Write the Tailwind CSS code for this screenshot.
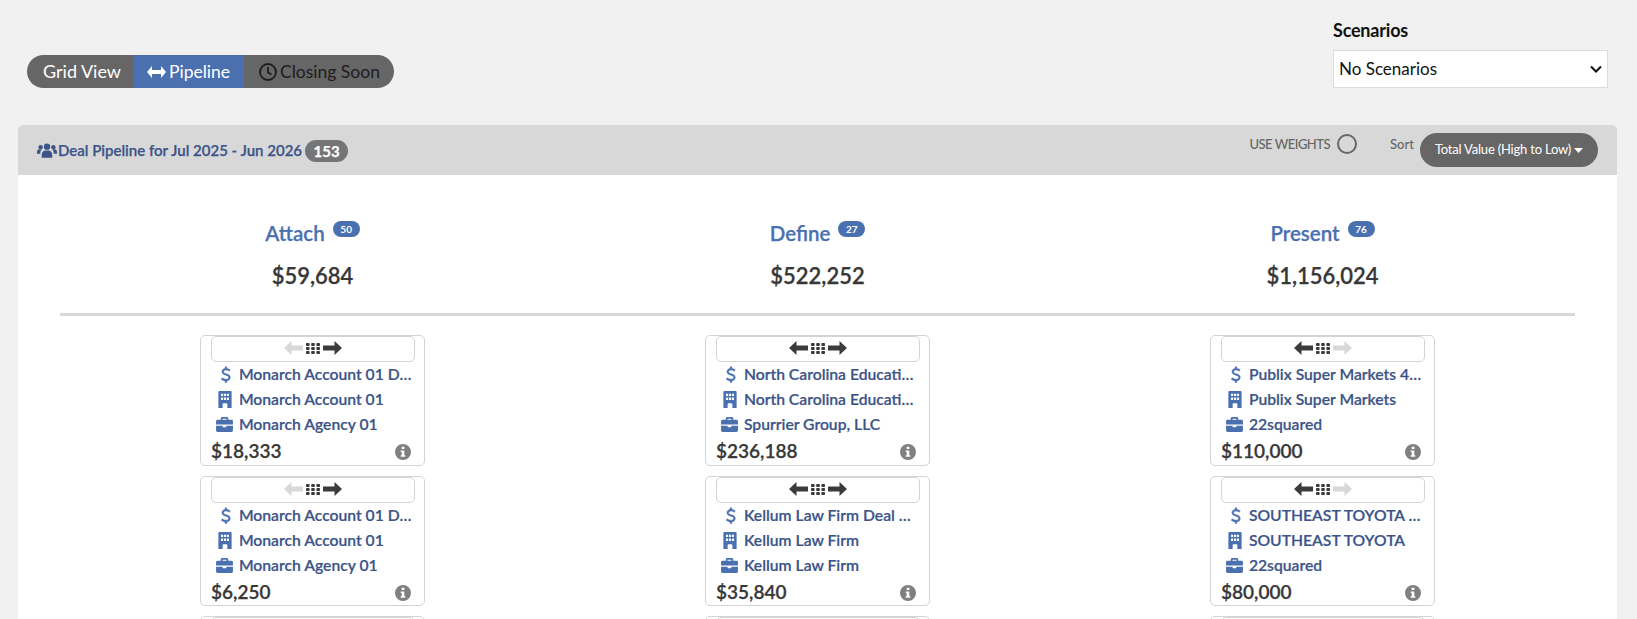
<!DOCTYPE html>
<html>
<head>
<meta charset="utf-8">
<script src="https://cdn.jsdelivr.net/npm/@tailwindcss/browser@4"></script>
</head>
<body class="bg-[#f1f1f1] font-['Lato',sans-serif] h-[619px] overflow-hidden">
<svg width="0" height="0" class="absolute">
  <defs>
    <symbol id="dollar" viewBox="0 0 12 20"><path d="M6.900 1v1.800c1.600.2 3 .8 4 1.500L9.900 6.100C8.800 5.300 7.600 4.800 6 4.800c-1.700 0-2.800.8-2.800 1.900 0 1.300 1.200 1.800 3.100 2.400 2.700.8 4.700 1.700 4.700 4.300 0 2.300-1.700 3.800-4.100 4.100V19.500H5V17.500c-1.900-.2-3.500-.9-4.600-1.900l1.100-1.700c1.200 1 2.800 1.700 4.500 1.700 1.900 0 3.100-.9 3.100-2.200 0-1.400-1.200-2-3.300-2.600C3.300 10 1.200 9.100 1.200 6.700c0-2.100 1.700-3.600 3.800-3.900V1z" fill="currentColor" stroke="currentColor" stroke-width=".6"/></symbol>
    <symbol id="building" viewBox="0 0 14 18"><path fill-rule="evenodd" d="M1 0h12a1 1 0 0 1 1 1v17H9.500v-4a1 1 0 0 0-1-1h-3a1 1 0 0 0-1 1v4H0V1a1 1 0 0 1 1-1zM2.800 2.800v2.400h2.200V2.800zm3.100 0v2.400h2.200V2.800zm3.100 0v2.400h2.200V2.800zM2.800 7v2.400h2.200V7zm3.100 0v2.400h2.200V7zM9 7v2.400h2.200V7z" fill="currentColor"/></symbol>
    <symbol id="briefcase" viewBox="0 0 18 16"><path fill-rule="evenodd" d="M5 3V1.500A1.500 1.500 0 0 1 6.500 0h5A1.500 1.500 0 0 1 13 1.500V3h3.500A1.500 1.500 0 0 1 18 4.500V8H0V4.500A1.500 1.500 0 0 1 1.500 3zm1.800 0h4.400V1.800H6.800zM0 9.300h7v1.200a.5.500 0 0 0 .5.500h3a.5.500 0 0 0 .5-.5V9.300h7v5.200a1.500 1.500 0 0 1-1.500 1.500h-15A1.500 1.500 0 0 1 0 14.500z" fill="currentColor"/></symbol>
    <symbol id="info" viewBox="0 0 16 16"><path fill-rule="evenodd" d="M8 0a8 8 0 1 1 0 16A8 8 0 0 1 8 0zM6.700 2.700v2.300h2.700V2.700zM5.700 6.500v1.500h1v3.200h-1v1.500h4.600v-1.500h-1V6.500z" fill="currentColor"/></symbol>
    <symbol id="left" viewBox="0 0 19 14"><path d="M7.500 0 0 7l7.500 7V9.500H19v-5H7.500z" fill="currentColor"/></symbol>
    <symbol id="right" viewBox="0 0 19 14"><path d="M11.500 0 19 7l-7.500 7V9.500H0v-5h11.500z" fill="currentColor"/></symbol>
    <symbol id="grip" viewBox="0 0 14 11"><g fill="#3b3b3b"><rect x="0" y="0" width="3.600" height="3" rx=".8"/><rect x="5.200" y="0" width="3.600" height="3" rx=".8"/><rect x="10.400" y="0" width="3.600" height="3" rx=".8"/><rect x="0" y="4" width="3.600" height="3" rx=".8"/><rect x="5.200" y="4" width="3.600" height="3" rx=".8"/><rect x="10.400" y="4" width="3.600" height="3" rx=".8"/><rect x="0" y="8" width="3.600" height="3" rx=".8"/><rect x="5.200" y="8" width="3.600" height="3" rx=".8"/><rect x="10.400" y="8" width="3.600" height="3" rx=".8"/></g></symbol>
  </defs>
</svg>

<div class="flex justify-between items-start h-[125px] pl-[27px] pr-[29px]">
  <div class="mt-[55px] flex h-[33px] rounded-full overflow-hidden bg-[#666666] text-[17.500px] leading-[33px]">
    <div class="w-[106px] pl-[16px] text-white text-[18px]">Grid View</div>
    <div class="w-[111px] bg-[#4a70b0] text-white flex items-center pl-[14px] gap-[3px]">
      <svg class="w-[19px] h-[12px]" viewBox="0 0 19 12"><path d="M5 0 0 6l5 6V8h9v4l5-6-5-6v4H5z" fill="currentColor"/></svg>Pipeline
    </div>
    <div class="w-[150px] text-[#1d1d1d] flex items-center pl-[15px] gap-[3px]">
      <svg class="w-[18px] h-[18px]" viewBox="0 0 18 18" fill="none" stroke="currentColor" stroke-width="1.800"><circle cx="9" cy="9" r="8"/><path d="M9 4v5.500l3.500 2"/></svg>Closing Soon
    </div>
  </div>
  <div class="w-[275px] mt-[19px]">
    <div class="text-[18px] font-bold text-[#111] leading-[22px] -tracking-[0.2px]">Scenarios</div>
    <div class="mt-[9px] h-[38px] bg-white border border-[#dcdcdc] flex items-center justify-between pl-[5px] pr-[5px] text-[17px] text-[#111]">
      <span>No Scenarios</span>
      <svg class="w-[12px] h-[8px]" viewBox="0 0 12 8" fill="none" stroke="#111" stroke-width="2"><path d="M1 1.500 6 6.500l5-5"/></svg>
    </div>
  </div>
</div>

<div class="ml-[18px] w-[1599px] rounded-t-[5px] bg-white">
  <div class="h-[50px] bg-[#d8d8d8] rounded-t-[5px] flex items-start pl-[19px] pr-[19px]">
    <div class="flex items-center mt-[13px] text-[#3c5488] text-[15px] font-semibold [-webkit-text-stroke:0.25px]">
      <svg class="w-[20px] h-[15px] mr-[1px] text-[#3c5488]" viewBox="0 0 21 15"><g fill="currentColor"><circle cx="10.500" cy="3.500" r="3.300"/><path d="M5 15v-3c0-2.500 2-4.500 4-4.500h3c2 0 4 2 4 4.500v3z"/><circle cx="3.800" cy="4" r="2.300"/><circle cx="17.200" cy="4" r="2.300"/><path d="M0 11V9c0-1.500 1-2.700 2.500-2.700H5c-1 .9-1.500 2.500-1.500 4.700zM21 11V9c0-1.500-1-2.700-2.500-2.700H16c1 .9 1.500 2.500 1.500 4.700z"/></g></svg>
      <span>Deal Pipeline for Jul 2025 - Jun 2026</span>
      <span class="ml-[3px] mt-[2px] h-[22px] w-[43px] rounded-full bg-[#757575] text-white font-bold text-[15px] leading-[22px] text-center">153</span>
    </div>
    <div class="ml-auto flex items-start">
      <span class="mt-[10px] text-[13px] leading-[18px] font-medium text-[#666] -tracking-[0.5px]">USE WEIGHTS</span>
      <span class="ml-[7px] mt-[9px] w-[20px] h-[20px] rounded-full border-2 border-[#666]"></span>
      <span class="ml-[33px] mt-[10px] text-[13px] leading-[18px] font-medium text-[#666]">Sort</span>
      <div class="ml-[6px] mt-[8px] w-[178px] h-[34px] rounded-full bg-[#666666] text-white text-[13px] flex items-center justify-center gap-[3px] -tracking-[0.2px]">
        Total Value (High to Low)
        <svg class="w-[9px] h-[5px]" viewBox="0 0 9 5"><path d="M0 0h9L4.500 5z" fill="currentColor"/></svg>
      </div>
    </div>
  </div>

  <div class="px-[42px]">
    <div class="grid grid-cols-3 h-[141px] border-b-[3px] border-[#d8d8d8] text-center">
      <div class="pt-[43px]">
        <div class="h-[30px] flex justify-center items-start">
          <span class="text-[20.500px] leading-[30px] text-[#4a70b0] font-semibold [-webkit-text-stroke:0.25px]">Attach</span>
          <span class="ml-[8px] mt-[3px] w-[27px] h-[16px] rounded-full bg-[#4a70b0] text-white text-[10px] font-bold leading-[16px]">50</span>
        </div>
        <div class="mt-[13px] text-[22px] leading-[30px] text-[#383838] font-semibold [-webkit-text-stroke:0.25px]">$59,684</div>
      </div>
      <div class="pt-[43px]">
        <div class="h-[30px] flex justify-center items-start">
          <span class="text-[20.500px] leading-[30px] text-[#4a70b0] font-semibold [-webkit-text-stroke:0.25px]">Define</span>
          <span class="ml-[8px] mt-[3px] w-[27px] h-[16px] rounded-full bg-[#4a70b0] text-white text-[10px] font-bold leading-[16px]">27</span>
        </div>
        <div class="mt-[13px] text-[22px] leading-[30px] text-[#383838] font-semibold [-webkit-text-stroke:0.25px]">$522,252</div>
      </div>
      <div class="pt-[43px]">
        <div class="h-[30px] flex justify-center items-start">
          <span class="text-[20.500px] leading-[30px] text-[#4a70b0] font-semibold [-webkit-text-stroke:0.25px]">Present</span>
          <span class="ml-[8px] mt-[3px] w-[27px] h-[16px] rounded-full bg-[#4a70b0] text-white text-[10px] font-bold leading-[16px]">76</span>
        </div>
        <div class="mt-[13px] text-[22px] leading-[30px] text-[#383838] font-semibold [-webkit-text-stroke:0.25px]">$1,156,024</div>
      </div>
    </div>

    <div class="grid grid-cols-3 pt-[19px]">
      <!-- Attach -->
      <div class="flex flex-col items-center gap-[10px]">
        <div class="w-[225px] h-[131px] bg-white border border-[#d4d4d4] rounded-[5px] pl-[10px] pr-[9px] shrink-0">
          <div class="h-[26px] pb-[2px] border border-[#d4d4d4] rounded-[5px] flex items-center justify-center gap-[3px]">
            <svg class="w-[19px] h-[14px] text-[#d8d8d8]"><use href="#left"/></svg><svg class="w-[14px] h-[11px]"><use href="#grip"/></svg><svg class="w-[19px] h-[14px] text-[#3b3b3b]"><use href="#right"/></svg>
          </div>
          <div class="h-[25px] flex items-center text-[#3c5488] text-[15.700px] font-semibold [-webkit-text-stroke:0.2px]"><span class="w-[27px] flex justify-center text-[#4a70b0]"><svg class="w-[12px] h-[17px] ml-[4px]"><use href="#dollar"/></svg></span><span class="truncate pl-[1px] w-[178px]">Monarch Account 01 Deal 1</span></div>
          <div class="h-[25px] flex items-center text-[#3c5488] text-[15.700px] font-semibold [-webkit-text-stroke:0.2px]"><span class="w-[27px] flex justify-center text-[#4a70b0]"><svg class="w-[14px] h-[17px] ml-[1px]"><use href="#building"/></svg></span><span class="truncate pl-[1px] w-[178px]">Monarch Account 01</span></div>
          <div class="h-[25px] flex items-center text-[#3c5488] text-[15.700px] font-semibold [-webkit-text-stroke:0.2px]"><span class="w-[27px] flex justify-center text-[#4a70b0]"><svg class="w-[17px] h-[15px]"><use href="#briefcase"/></svg></span><span class="truncate pl-[1px] w-[178px]">Monarch Agency 01</span></div>
          <div class="h-[27px] pt-[2px] flex items-center justify-between text-[19px] text-[#383838] font-semibold [-webkit-text-stroke:0.25px]">$18,333<svg class="w-[16px] h-[16px] text-[#808080] mr-[4px]"><use href="#info"/></svg></div>
        </div>
        <div class="w-[225px] h-[130px] bg-white border border-[#d4d4d4] rounded-[5px] pl-[10px] pr-[9px] shrink-0">
          <div class="h-[26px] pb-[2px] border border-[#d4d4d4] rounded-[5px] flex items-center justify-center gap-[3px]">
            <svg class="w-[19px] h-[14px] text-[#d8d8d8]"><use href="#left"/></svg><svg class="w-[14px] h-[11px]"><use href="#grip"/></svg><svg class="w-[19px] h-[14px] text-[#3b3b3b]"><use href="#right"/></svg>
          </div>
          <div class="h-[25px] flex items-center text-[#3c5488] text-[15.700px] font-semibold [-webkit-text-stroke:0.2px]"><span class="w-[27px] flex justify-center text-[#4a70b0]"><svg class="w-[12px] h-[17px] ml-[4px]"><use href="#dollar"/></svg></span><span class="truncate pl-[1px] w-[178px]">Monarch Account 01 Deal 2</span></div>
          <div class="h-[25px] flex items-center text-[#3c5488] text-[15.700px] font-semibold [-webkit-text-stroke:0.2px]"><span class="w-[27px] flex justify-center text-[#4a70b0]"><svg class="w-[14px] h-[17px] ml-[1px]"><use href="#building"/></svg></span><span class="truncate pl-[1px] w-[178px]">Monarch Account 01</span></div>
          <div class="h-[25px] flex items-center text-[#3c5488] text-[15.700px] font-semibold [-webkit-text-stroke:0.2px]"><span class="w-[27px] flex justify-center text-[#4a70b0]"><svg class="w-[17px] h-[15px]"><use href="#briefcase"/></svg></span><span class="truncate pl-[1px] w-[178px]">Monarch Agency 01</span></div>
          <div class="h-[27px] pt-[2px] flex items-center justify-between text-[19px] text-[#383838] font-semibold [-webkit-text-stroke:0.25px]">$6,250<svg class="w-[16px] h-[16px] text-[#808080] mr-[4px]"><use href="#info"/></svg></div>
        </div>
        <div class="w-[225px] h-[130px] bg-white border border-[#d4d4d4] rounded-[5px] pl-[10px] pr-[9px] shrink-0"><div class="h-[26px] border border-[#d4d4d4] rounded-[5px]"></div></div>
      </div>
      <!-- Define -->
      <div class="flex flex-col items-center gap-[10px]">
        <div class="w-[225px] h-[131px] bg-white border border-[#d4d4d4] rounded-[5px] pl-[10px] pr-[9px] shrink-0">
          <div class="h-[26px] pb-[2px] border border-[#d4d4d4] rounded-[5px] flex items-center justify-center gap-[3px]">
            <svg class="w-[19px] h-[14px] text-[#3b3b3b]"><use href="#left"/></svg><svg class="w-[14px] h-[11px]"><use href="#grip"/></svg><svg class="w-[19px] h-[14px] text-[#3b3b3b]"><use href="#right"/></svg>
          </div>
          <div class="h-[25px] flex items-center text-[#3c5488] text-[15.700px] font-semibold [-webkit-text-stroke:0.2px]"><span class="w-[27px] flex justify-center text-[#4a70b0]"><svg class="w-[12px] h-[17px] ml-[4px]"><use href="#dollar"/></svg></span><span class="truncate pl-[1px] w-[178px]">North Carolina Education Lottery</span></div>
          <div class="h-[25px] flex items-center text-[#3c5488] text-[15.700px] font-semibold [-webkit-text-stroke:0.2px]"><span class="w-[27px] flex justify-center text-[#4a70b0]"><svg class="w-[14px] h-[17px] ml-[1px]"><use href="#building"/></svg></span><span class="truncate pl-[1px] w-[178px]">North Carolina Education Lottery</span></div>
          <div class="h-[25px] flex items-center text-[#3c5488] text-[15.700px] font-semibold [-webkit-text-stroke:0.2px]"><span class="w-[27px] flex justify-center text-[#4a70b0]"><svg class="w-[17px] h-[15px]"><use href="#briefcase"/></svg></span><span class="truncate pl-[1px] w-[178px]">Spurrier Group, LLC</span></div>
          <div class="h-[27px] pt-[2px] flex items-center justify-between text-[19px] text-[#383838] font-semibold [-webkit-text-stroke:0.25px]">$236,188<svg class="w-[16px] h-[16px] text-[#808080] mr-[4px]"><use href="#info"/></svg></div>
        </div>
        <div class="w-[225px] h-[130px] bg-white border border-[#d4d4d4] rounded-[5px] pl-[10px] pr-[9px] shrink-0">
          <div class="h-[26px] pb-[2px] border border-[#d4d4d4] rounded-[5px] flex items-center justify-center gap-[3px]">
            <svg class="w-[19px] h-[14px] text-[#3b3b3b]"><use href="#left"/></svg><svg class="w-[14px] h-[11px]"><use href="#grip"/></svg><svg class="w-[19px] h-[14px] text-[#3b3b3b]"><use href="#right"/></svg>
          </div>
          <div class="h-[25px] flex items-center text-[#3c5488] text-[15.700px] font-semibold [-webkit-text-stroke:0.2px]"><span class="w-[27px] flex justify-center text-[#4a70b0]"><svg class="w-[12px] h-[17px] ml-[4px]"><use href="#dollar"/></svg></span><span class="truncate pl-[1px] w-[178px]">Kellum Law Firm Deal Renewal</span></div>
          <div class="h-[25px] flex items-center text-[#3c5488] text-[15.700px] font-semibold [-webkit-text-stroke:0.2px]"><span class="w-[27px] flex justify-center text-[#4a70b0]"><svg class="w-[14px] h-[17px] ml-[1px]"><use href="#building"/></svg></span><span class="truncate pl-[1px] w-[178px]">Kellum Law Firm</span></div>
          <div class="h-[25px] flex items-center text-[#3c5488] text-[15.700px] font-semibold [-webkit-text-stroke:0.2px]"><span class="w-[27px] flex justify-center text-[#4a70b0]"><svg class="w-[17px] h-[15px]"><use href="#briefcase"/></svg></span><span class="truncate pl-[1px] w-[178px]">Kellum Law Firm</span></div>
          <div class="h-[27px] pt-[2px] flex items-center justify-between text-[19px] text-[#383838] font-semibold [-webkit-text-stroke:0.25px]">$35,840<svg class="w-[16px] h-[16px] text-[#808080] mr-[4px]"><use href="#info"/></svg></div>
        </div>
        <div class="w-[225px] h-[130px] bg-white border border-[#d4d4d4] rounded-[5px] pl-[10px] pr-[9px] shrink-0"><div class="h-[26px] border border-[#d4d4d4] rounded-[5px]"></div></div>
      </div>
      <!-- Present -->
      <div class="flex flex-col items-center gap-[10px]">
        <div class="w-[225px] h-[131px] bg-white border border-[#d4d4d4] rounded-[5px] pl-[10px] pr-[9px] shrink-0">
          <div class="h-[26px] pb-[2px] border border-[#d4d4d4] rounded-[5px] flex items-center justify-center gap-[3px]">
            <svg class="w-[19px] h-[14px] text-[#3b3b3b]"><use href="#left"/></svg><svg class="w-[14px] h-[11px]"><use href="#grip"/></svg><svg class="w-[19px] h-[14px] text-[#d8d8d8]"><use href="#right"/></svg>
          </div>
          <div class="h-[25px] flex items-center text-[#3c5488] text-[15.700px] font-semibold [-webkit-text-stroke:0.2px]"><span class="w-[27px] flex justify-center text-[#4a70b0]"><svg class="w-[12px] h-[17px] ml-[4px]"><use href="#dollar"/></svg></span><span class="truncate pl-[1px] w-[178px]">Publix Super Markets 4Q Renewal</span></div>
          <div class="h-[25px] flex items-center text-[#3c5488] text-[15.700px] font-semibold [-webkit-text-stroke:0.2px]"><span class="w-[27px] flex justify-center text-[#4a70b0]"><svg class="w-[14px] h-[17px] ml-[1px]"><use href="#building"/></svg></span><span class="truncate pl-[1px] w-[178px]">Publix Super Markets</span></div>
          <div class="h-[25px] flex items-center text-[#3c5488] text-[15.700px] font-semibold [-webkit-text-stroke:0.2px]"><span class="w-[27px] flex justify-center text-[#4a70b0]"><svg class="w-[17px] h-[15px]"><use href="#briefcase"/></svg></span><span class="truncate pl-[1px] w-[178px]">22squared</span></div>
          <div class="h-[27px] pt-[2px] flex items-center justify-between text-[19px] text-[#383838] font-semibold [-webkit-text-stroke:0.25px]">$110,000<svg class="w-[16px] h-[16px] text-[#808080] mr-[4px]"><use href="#info"/></svg></div>
        </div>
        <div class="w-[225px] h-[130px] bg-white border border-[#d4d4d4] rounded-[5px] pl-[10px] pr-[9px] shrink-0">
          <div class="h-[26px] pb-[2px] border border-[#d4d4d4] rounded-[5px] flex items-center justify-center gap-[3px]">
            <svg class="w-[19px] h-[14px] text-[#3b3b3b]"><use href="#left"/></svg><svg class="w-[14px] h-[11px]"><use href="#grip"/></svg><svg class="w-[19px] h-[14px] text-[#d8d8d8]"><use href="#right"/></svg>
          </div>
          <div class="h-[25px] flex items-center text-[#3c5488] text-[15.700px] font-semibold [-webkit-text-stroke:0.2px]"><span class="w-[27px] flex justify-center text-[#4a70b0]"><svg class="w-[12px] h-[17px] ml-[4px]"><use href="#dollar"/></svg></span><span class="truncate pl-[1px] w-[178px]">SOUTHEAST TOYOTA Distributors</span></div>
          <div class="h-[25px] flex items-center text-[#3c5488] text-[15.700px] font-semibold [-webkit-text-stroke:0.2px]"><span class="w-[27px] flex justify-center text-[#4a70b0]"><svg class="w-[14px] h-[17px] ml-[1px]"><use href="#building"/></svg></span><span class="truncate pl-[1px] w-[178px]">SOUTHEAST TOYOTA</span></div>
          <div class="h-[25px] flex items-center text-[#3c5488] text-[15.700px] font-semibold [-webkit-text-stroke:0.2px]"><span class="w-[27px] flex justify-center text-[#4a70b0]"><svg class="w-[17px] h-[15px]"><use href="#briefcase"/></svg></span><span class="truncate pl-[1px] w-[178px]">22squared</span></div>
          <div class="h-[27px] pt-[2px] flex items-center justify-between text-[19px] text-[#383838] font-semibold [-webkit-text-stroke:0.25px]">$80,000<svg class="w-[16px] h-[16px] text-[#808080] mr-[4px]"><use href="#info"/></svg></div>
        </div>
        <div class="w-[225px] h-[130px] bg-white border border-[#d4d4d4] rounded-[5px] pl-[10px] pr-[9px] shrink-0"><div class="h-[26px] border border-[#d4d4d4] rounded-[5px]"></div></div>
      </div>
    </div>
  </div>
</div>
</body>
</html>
